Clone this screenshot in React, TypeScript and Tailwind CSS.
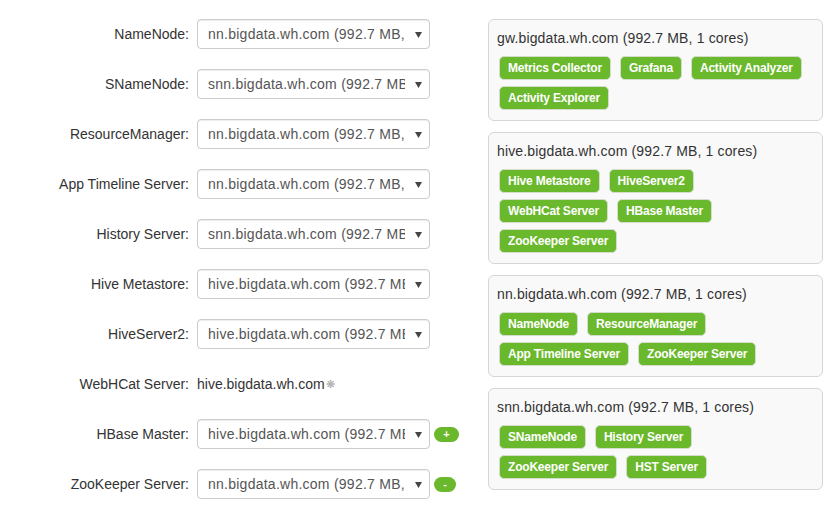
import React from "react";

type Row = {
	label: string;
	value: string;
	kind?: "select" | "text";
	action?: "+" | "-";
};

const rows: Row[] = [
	{ label: "NameNode:", value: "nn.bigdata.wh.com (992.7 MB, 1 cores)" },
	{ label: "SNameNode:", value: "snn.bigdata.wh.com (992.7 MB, 1 cores)" },
	{ label: "ResourceManager:", value: "nn.bigdata.wh.com (992.7 MB, 1 cores)" },
	{ label: "App Timeline Server:", value: "nn.bigdata.wh.com (992.7 MB, 1 cores)" },
	{ label: "History Server:", value: "snn.bigdata.wh.com (992.7 MB, 1 cores)" },
	{ label: "Hive Metastore:", value: "hive.bigdata.wh.com (992.7 MB, 1 cores)" },
	{ label: "HiveServer2:", value: "hive.bigdata.wh.com (992.7 MB, 1 cores)" },
	{ label: "WebHCat Server:", value: "hive.bigdata.wh.com", kind: "text" },
	{ label: "HBase Master:", value: "hive.bigdata.wh.com (992.7 MB, 1 cores)", action: "+" },
	{ label: "ZooKeeper Server:", value: "nn.bigdata.wh.com (992.7 MB, 1 cores)", action: "-" },
];

const hosts = [
	{
		name: "gw.bigdata.wh.com (992.7 MB, 1 cores)",
		rows: [["Metrics Collector", "Grafana", "Activity Analyzer"], ["Activity Explorer"]],
	},
	{
		name: "hive.bigdata.wh.com (992.7 MB, 1 cores)",
		rows: [["Hive Metastore", "HiveServer2"], ["WebHCat Server", "HBase Master"], ["ZooKeeper Server"]],
	},
	{
		name: "nn.bigdata.wh.com (992.7 MB, 1 cores)",
		rows: [["NameNode", "ResourceManager"], ["App Timeline Server", "ZooKeeper Server"]],
	},
	{
		name: "snn.bigdata.wh.com (992.7 MB, 1 cores)",
		rows: [["SNameNode", "History Server"], ["ZooKeeper Server", "HST Server"]],
	},
];

const FakeSelect = ({ value }: { value: string }) => (
	<div className="relative flex items-center w-[233px] h-[30px] border border-[#ccc] rounded-[4px] bg-white shadow-[inset_0_1px_1px_rgba(0,0,0,0.075)]">
		<div className="w-[197px] ml-[10px] overflow-hidden whitespace-nowrap text-[#555] tracking-[0.25px]">{value}</div>
		<svg className="absolute right-[7px] top-[12px]" width="7" height="6" viewBox="0 0 7 6">
			<path d="M0 0 H7 L3.5 6 Z" fill="#444" />
		</svg>
	</div>
);

const Badge = ({ text }: { text: string }) => (
	<span className="h-[24px] px-2 flex items-center rounded-[5px] border border-[#d4dccb] bg-[#6ab82b] text-white text-[12px] font-bold tracking-[-0.2px] whitespace-nowrap">
		{text}
	</span>
);

export default function App() {
	return (
		<div
			className="w-[835px] h-[509px] bg-white flex text-[14px] text-[#333]"
			style={{ fontFamily: '"Liberation Sans", Arial, sans-serif' }}
		>
			{/* LEFT: assignment form */}
			<div className="w-[488px] pt-[19px] flex flex-col gap-[20px]">
				{rows.map((r) => (
					<div key={r.label} className="flex items-center h-[30px]">
						<div className="w-[189px] text-right">{r.label}</div>
						<div className="ml-2 flex items-center">
							{r.kind === "text" ? (
								<span className="flex items-center">
									{r.value}
									<span className="text-[11px] text-[#aaa] ml-[1px]">❋</span>
								</span>
							) : (
								<FakeSelect value={r.value} />
							)}
							{r.action === "+" && (
								<button className="ml-[4px] w-[25px] h-[15px] rounded-full bg-[#6ab82b] text-white text-[11px] font-bold leading-none flex items-center justify-center">
									+
								</button>
							)}
							{r.action === "-" && (
								<button className="ml-[4px] w-[22px] h-[15px] rounded-full bg-[#6ab82b] text-white text-[11px] font-bold leading-none flex items-center justify-center">
									-
								</button>
							)}
						</div>
					</div>
				))}
			</div>

			{/* RIGHT: hosts */}
			<div className="w-[335px] pt-[19px] flex flex-col gap-[11px]">
				{hosts.map((h) => (
					<div key={h.name} className="border border-[#d6d6d6] rounded-[6px] bg-[#f9f9f9] pt-[8px] pb-[10px] px-[8px]">
						<div className="leading-[20px] tracking-[0.15px]">{h.name}</div>
						<div className="mt-[8px] flex flex-col gap-[6px] ml-[2px]">
							{h.rows.map((row, i) => (
								<div key={i} className="flex gap-[9px]">
									{row.map((b) => (
										<Badge key={b} text={b} />
									))}
								</div>
							))}
						</div>
					</div>
				))}
			</div>
		</div>
	);
}
